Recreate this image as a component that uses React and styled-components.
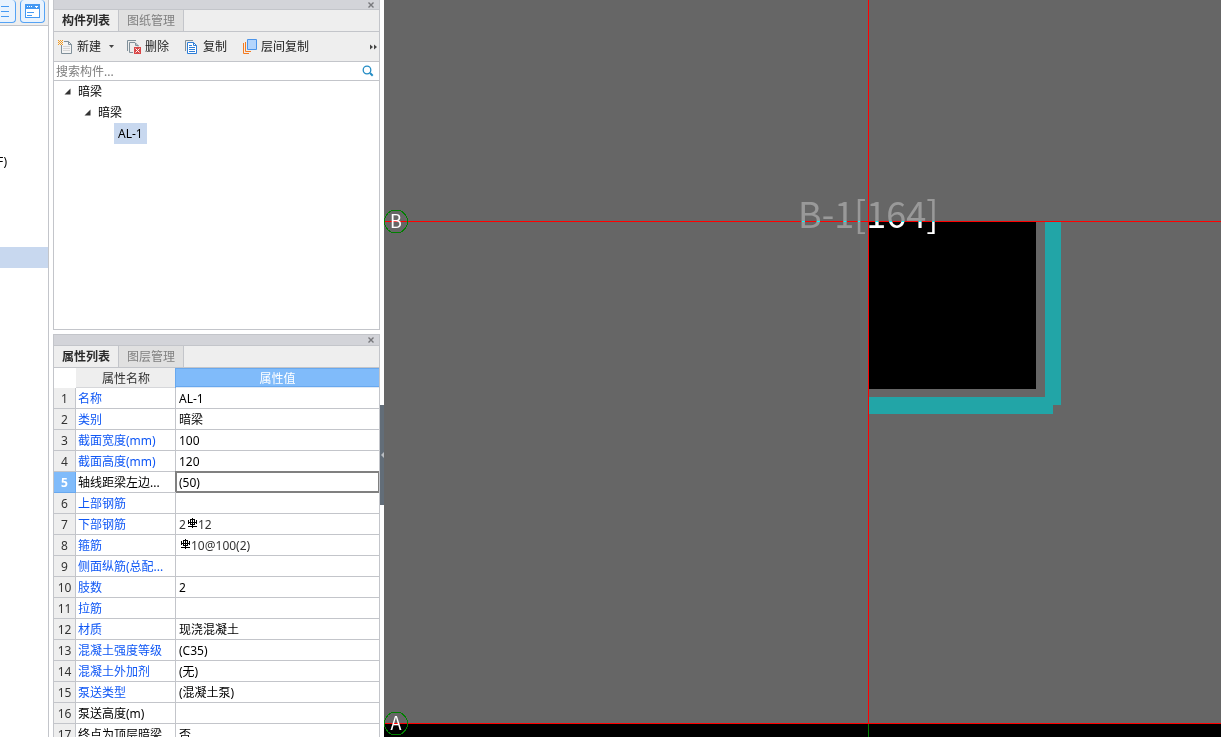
import React from "react";
import styled, { createGlobalStyle, css } from "styled-components";

const LINE = "#c3c5ca";
const BLUE = "#0f57f5";
const PICK = "#c8d8ef";
const FONT = `"Noto Sans", "Noto Sans CJK SC", sans-serif`;

const Global = createGlobalStyle`
  *, *::before, *::after { box-sizing: border-box; }
  body { margin: 0; overflow: hidden; background: #fff; }
  button, input { font: inherit; color: inherit; }
`;

const Shell = styled.div`
  display: flex;
  height: 100vh;
  overflow: hidden;
  background: #fff;
  color: #000;
  font: 12px/20px ${FONT};
`;

const Rail = styled.aside`
  flex: 0 0 49px;
  display: flex;
  flex-direction: column;
  margin-right: 4px;
  border-right: 1px solid ${LINE};
  overflow: hidden;
`;

const RailBar = styled.div`
  flex: 0 0 26px;
  display: flex;
  justify-content: flex-end;
  align-items: flex-start;
  gap: 4px;
  padding-right: 3px;
  background: #eeeeee;
  border-bottom: 1px solid ${LINE};
`;

const RailButton = styled.button`
  flex: 0 0 25px;
  height: 23px;
  display: flex;
  align-items: center;
  justify-content: center;
  padding: 0;
  border: 1px solid #55a3f5;
  border-top: 0;
  border-radius: 4px;
  background: #e9f3fe;
`;

const RailList = styled.ul`
  list-style: none;
  margin: 0;
  padding: 126px 0 0;
`;

const RailItem = styled.li`
  display: flex;
  justify-content: flex-end;
  height: 21px;
  width: ${(p) => (p.$selected ? "auto" : "7px")};
  margin-bottom: ${(p) => (p.$selected ? "0" : "74px")};
  background: ${(p) => (p.$selected ? PICK : "transparent")};
  white-space: nowrap;
`;

const Dock = styled.div`
  flex: 0 0 327px;
  display: flex;
  flex-direction: column;
  gap: 4px;
  min-height: 0;
`;

const Panel = styled.section`
  display: flex;
  flex-direction: column;
  flex: ${(p) => (p.$grow ? "1 0 auto" : "0 0 330px")};
  border: 1px solid ${LINE};
  border-top-width: ${(p) => (p.$grow ? "1px" : "0")};
`;

const TitleBar = styled.header`
  flex: 0 0 ${(p) => (p.$tall ? "11px" : "10px")};
  display: flex;
  justify-content: flex-end;
  align-items: center;
  padding-right: 4px;
  background: #d3d4d9;
  border-bottom: 1px solid ${LINE};
`;

const CloseButton = styled.button`
  display: flex;
  padding: 0;
  border: 0;
  background: none;
`;

const Tabs = styled.div`
  flex: 0 0 22px;
  display: flex;
  background: #eeeeee;
  border-bottom: 1px solid ${LINE};
`;

const Tab = styled.button`
  flex: 0 0 65px;
  padding: 0;
  border: 0;
  border-right: 1px solid ${LINE};
  line-height: 21px;
  background: ${(p) => (p.$active ? "#eeeeee" : "#e0e0e0")};
  color: ${(p) => (p.$active ? "#2b2b2b" : "#808080")};
  font-weight: ${(p) => (p.$active ? 700 : 400)};
`;

const ToolBar = styled.div`
  flex: 0 0 30px;
  display: flex;
  align-items: center;
  gap: 15px;
  padding-left: 4px;
  background: #eeeeee;
  border-bottom: 1px solid ${LINE};
`;

const ToolButton = styled.button`
  display: flex;
  align-items: center;
  gap: 3px;
  padding: 0;
  border: 0;
  background: none;
  color: #222;
  white-space: nowrap;
`;

const Caret = styled.svg`
  margin: 0 -3px 0 5px;
`;

const MoreButton = styled(ToolButton)`
  margin-left: auto;
  padding-right: 1px;
`;

const SearchRow = styled.label`
  flex: 0 0 19px;
  display: flex;
  align-items: center;
  padding: 0 5px 0 2px;
  border-bottom: 1px solid ${LINE};
`;

const SearchInput = styled.input`
  flex: 1;
  min-width: 0;
  height: 18px;
  padding: 2px 0 0;
  border: 0;
  outline: 0;
  background: none;
  &::placeholder { color: #7d7d7d; opacity: 1; }
`;

const Tree = styled.ul`
  list-style: none;
  margin: 0;
  padding: 0;
`;

const TreeItem = styled.li`
  display: flex;
  align-items: center;
  gap: 7px;
  height: 21px;
  padding-left: ${(p) => 10 + p.$depth * 20}px;
`;

const TreeLabel = styled.span`
  line-height: 21px;
  ${(p) => p.$selected && css`
    padding: 0 4px;
    background: ${PICK};
  `}
`;

const Grid = styled.table`
  width: 100%;
  table-layout: fixed;
  border-collapse: separate;
  border-spacing: 0;
`;

const HeadCell = styled.th`
  height: 20px;
  padding: 2px 0 0;
  line-height: 17px;
  font-weight: 400;
  background: ${(p) => (p.$active ? "#80bbfa" : "#eeeeee")};
  color: ${(p) => (p.$active ? "#fff" : "#333")};
  border-bottom: 1px solid ${(p) => (p.$active ? "#dfe9f5" : "#d6d7da")};
  ${(p) => p.$active && css`box-shadow: inset 0 1px #68a8ee, inset 0 -1px #68a8ee, -1px 0 #68a8ee;`}
`;

const Corner = styled.td`
  padding: 0;
`;

const IndexCell = styled.th`
  height: 21px;
  padding: 2px 0 0;
  line-height: 18px;
  font-weight: ${(p) => (p.$active ? 700 : 400)};
  background: ${(p) => (p.$active ? "#80bbfa" : "#eeeeee")};
  color: ${(p) => (p.$active ? "#fff" : "#333")};
  border: solid ${(p) => (p.$active ? "#68a8ee" : LINE)};
  border-width: 0 1px 1px 0;
`;

const Cell = styled.td`
  height: 21px;
  padding: 2px 2px 0;
  line-height: 18px;
  white-space: nowrap;
  color: ${(p) => (p.$linked ? BLUE : "#000")};
  border: solid ${LINE};
  border-width: 0 1px 1px 0;
`;

const ValueCell = styled(Cell)`
  padding: 2px 3px 0;
  border-right: 0;
  color: ${(p) => (p.$soft ? "#333" : "#000")};
  ${(p) => p.$editing && css`
    box-shadow: inset 0 0 0 1px #808080, -1px -1px #808080, 0 -1px #808080;
    border-bottom-color: #808080;
  `}
`;

const Splitter = styled.div`
  flex: 0 0 4px;
  padding-top: 405px;
`;

const SplitterGrip = styled.button`
  display: flex;
  align-items: center;
  width: 4px;
  height: 100px;
  padding: 0;
  border: 0;
  background: #626d78;
`;

const Viewport = styled.main`
  flex: 1;
  min-width: 0;
  background: #666666;
`;

const Drawing = styled.svg`
  display: block;
  width: 100%;
  height: 100%;
`;

const AxisLetter = styled.text`
  fill: #fff;
  font: 18px "Noto Sans CJK SC", sans-serif;
  text-anchor: middle;
`;

const PartLabel = styled.text`
  fill: #fff;
  font: 400 36px "Noto Sans CJK SC", sans-serif;
  mix-blend-mode: difference;
`;

const CloseIcon = () => (
  <svg width="8" height="6" viewBox="0 0 8 6" fill="none" stroke="#77787c" strokeWidth="1.4">
    <path d="M1.5 .5 6.5 5.5M6.5 .5 1.5 5.5" />
  </svg>
);

const ListIcon = () => (
  <svg width="19" height="16" viewBox="0 0 19 16" stroke="#4499f3" shapeRendering="crispEdges">
    <path d="M7 3.5h8M7 8.5h8M7 13.5h8" />
  </svg>
);

const WindowIcon = () => (
  <svg width="15" height="14" viewBox="0 0 15 14" shapeRendering="crispEdges">
    <rect x=".5" y=".5" width="14" height="13" fill="#fff" stroke="#4499f3" />
    <path d="M1 1h13v4H1z" fill="#4499f3" />
    <path d="M2 2h1v1H2zM4 2h1v1H4zM6 2h1v1H6zM10 2h3v1h-3zM11 3h1v1h-1z" fill="#fff" />
    <path d="M2 8h7v1H2zM2 11h5v1H2z" fill="#4499f3" />
  </svg>
);

const NewIcon = () => (
  <svg width="16" height="16" viewBox="0 0 16 16" fill="none">
    <path d="M3.500 6v8.500h10v-9L10.500 2.500H6" fill="#f3f3f3" stroke="#80909a" />
    <path d="M10.500 2.500v3h3" stroke="#80909a" />
    <path d="M5 7.500h7M5 9.500h7M5 11.500h7" stroke="#d5d5d5" />
    <path d="M0 1h1v1H0zM2 1h1v1H2zM4 1h1v1H4zM1 2h1v1H1zM3 2h1v1H3zM0 3h1v1H0zM2 3h1v1H2zM4 3h1v1H4zM1 4h1v1H1zM3 4h1v1H3zM0 5h1v1H0zM2 5h1v1H2zM4 5h1v1H4z" fill="#f39a1e" />
  </svg>
);

const DeleteIcon = () => (
  <svg width="16" height="16" viewBox="0 0 16 16" fill="none">
    <path d="M1.500 12V1.500H10" stroke="#80909a" />
    <path d="M7 13.500H3.500v-10H9l3 3v1M9.500 4v2.500h3" stroke="#80909a" />
    <path d="M8 8h7v7H8z" fill="#d94848" />
    <path d="m9.500 9.500 4 4m0-4-4 4" stroke="#fff" />
  </svg>
);

const CopyIcon = () => (
  <svg width="16" height="16" viewBox="0 0 16 16" fill="none">
    <path d="M1.500 12V1.500H9" stroke="#80909a" />
    <path d="M3.500 3.500h6l3 3v8h-9z" fill="#fff" stroke="#2f7fd8" />
    <path d="M9.500 3.500v3h3M5 6.500h3M5 8.500h6M5 10.500h6M5 12.500h6" stroke="#2f7fd8" />
  </svg>
);

const LayerIcon = () => (
  <svg width="16" height="16" viewBox="0 0 16 16" fill="none">
    <path d="M1.500 4v10.500H7M3.500 3v9.500H9" stroke="#f47b20" />
    <path d="M5.500 .5h9v10h-9z" fill="#b4d5fc" stroke="#4b94ea" />
  </svg>
);

const SearchIcon = () => (
  <svg width="12" height="12" viewBox="0 0 12 12" fill="none" stroke="#238cc4">
    <circle cx="5" cy="5" r="3.800" strokeWidth="1.300" />
    <path d="m8 8 2.700 2.700" strokeWidth="2" />
  </svg>
);

const MoreIcon = () => (
  <svg width="8" height="6" viewBox="0 0 8 6" fill="#444">
    <path d="M0 .5 3 3 0 5.500zM4 .5l3 2.500-3 2.500z" />
  </svg>
);

const Twisty = () => (
  <svg width="7" height="7" viewBox="0 0 7 7">
    <path d="M6.500 .5v6H.5z" fill="#333" />
  </svg>
);

const RebarMark = () => (
  <svg width="12" height="11" viewBox="0 0 12 11" fill="none" stroke="#000" shapeRendering="crispEdges">
    <path d="M6.500 0v10M4 1.500h5M2.500 2v4M10.500 2v4M3 4.500h7M4 6.500h5M2 8.500h9M4.500 1v5M8.500 1v5" />
  </svg>
);

const rows = [
  ["名称", "AL-1", true],
  ["类别", "暗梁", true],
  ["截面宽度(mm)", "100", true],
  ["截面高度(mm)", "120", true],
  ["轴线距梁左边...", "(50)", false],
  ["上部钢筋", "", true],
  ["下部钢筋", <>2<RebarMark />12</>, true],
  ["箍筋", <><RebarMark />10@100(2)</>, true],
  ["侧面纵筋(总配...", "", true],
  ["肢数", "2", true],
  ["拉筋", "", true],
  ["材质", "现浇混凝土", true],
  ["混凝土强度等级", "(C35)", true],
  ["混凝土外加剂", "(无)", true],
  ["泵送类型", "(混凝土泵)", true],
  ["泵送高度(m)", "", false],
  ["终点为顶层暗梁", "否", false],
];
const ACTIVE_ROW = 4;

const AxisBubble = ({ y, name }) => (
  <>
    <circle cx="12" cy={y + 0.5} r="11.500" fill="none" stroke="#008000" />
    <AxisLetter x="12" y={y + 7}>{name}</AxisLetter>
  </>
);

export default function App() {
  return (
    <Shell>
      <Global />
      <Rail>
        <RailBar>
          <RailButton aria-label="列表"><ListIcon /></RailButton>
          <RailButton aria-label="窗口"><WindowIcon /></RailButton>
        </RailBar>
        <RailList>
          <RailItem>F)</RailItem>
          <RailItem $selected />
        </RailList>
      </Rail>

      <Dock>
        <Panel>
          <TitleBar><CloseButton aria-label="关闭"><CloseIcon /></CloseButton></TitleBar>
          <Tabs>
            <Tab $active>构件列表</Tab>
            <Tab>图纸管理</Tab>
          </Tabs>
          <ToolBar>
            <ToolButton>
              <NewIcon />新建
              <Caret width="5" height="3" viewBox="0 0 5 3"><path d="M0 0h5L2.500 3z" fill="#444" /></Caret>
            </ToolButton>
            <ToolButton><DeleteIcon />删除</ToolButton>
            <ToolButton><CopyIcon />复制</ToolButton>
            <ToolButton><LayerIcon />层间复制</ToolButton>
            <MoreButton aria-label="更多"><MoreIcon /></MoreButton>
          </ToolBar>
          <SearchRow>
            <SearchInput aria-label="搜索构件" placeholder="搜索构件..." />
            <SearchIcon />
          </SearchRow>
          <Tree>
            <TreeItem $depth={0}><Twisty /><TreeLabel>暗梁</TreeLabel></TreeItem>
            <TreeItem $depth={1}><Twisty /><TreeLabel>暗梁</TreeLabel></TreeItem>
            <TreeItem $depth={2.5}><TreeLabel $selected>AL-1</TreeLabel></TreeItem>
          </Tree>
        </Panel>

        <Panel $grow>
          <TitleBar $tall><CloseButton aria-label="关闭"><CloseIcon /></CloseButton></TitleBar>
          <Tabs>
            <Tab $active>属性列表</Tab>
            <Tab>图层管理</Tab>
          </Tabs>
          <Grid>
            <colgroup>
              <col width="22" />
              <col width="100" />
              <col />
            </colgroup>
            <thead>
              <tr>
                <Corner />
                <HeadCell scope="col">属性名称</HeadCell>
                <HeadCell scope="col" $active>属性值</HeadCell>
              </tr>
            </thead>
            <tbody>
              {rows.map(([name, value, linked], i) => (
                <tr key={name}>
                  <IndexCell scope="row" $active={i === ACTIVE_ROW}>{i + 1}</IndexCell>
                  <Cell $linked={linked}>{name}</Cell>
                  <ValueCell $editing={i === ACTIVE_ROW} $soft={typeof value !== "string"}>{value}</ValueCell>
                </tr>
              ))}
            </tbody>
          </Grid>
        </Panel>
      </Dock>

      <Splitter>
        <SplitterGrip aria-label="收起面板">
          <svg width="4" height="6" viewBox="0 0 4 6"><path d="M4 0v6L1 3z" fill="#b9bdc2" /></svg>
        </SplitterGrip>
      </Splitter>

      <Viewport>
        <Drawing shapeRendering="crispEdges">
          <rect x="0" y="724" width="100%" height="100%" fill="#000" />
          <rect x="485" y="222" width="167" height="167" fill="#000" />
          <path d="M661 222h16v183h-8v9H485v-17h176z" fill="#22a5a7" />
          <rect x="0" y="221" width="100%" height="1" fill="#f00" />
          <rect x="0" y="723" width="100%" height="1" fill="#f00" />
          <rect x="484" y="0" width="1" height="724" fill="#f00" />
          <rect x="484" y="724" width="1" height="100%" fill="#008000" />
          <AxisBubble y={221} name="B" />
          <AxisBubble y={723} name="A" />
          <PartLabel x="414" y="228">B-1[164]</PartLabel>
        </Drawing>
      </Viewport>
    </Shell>
  );
}
